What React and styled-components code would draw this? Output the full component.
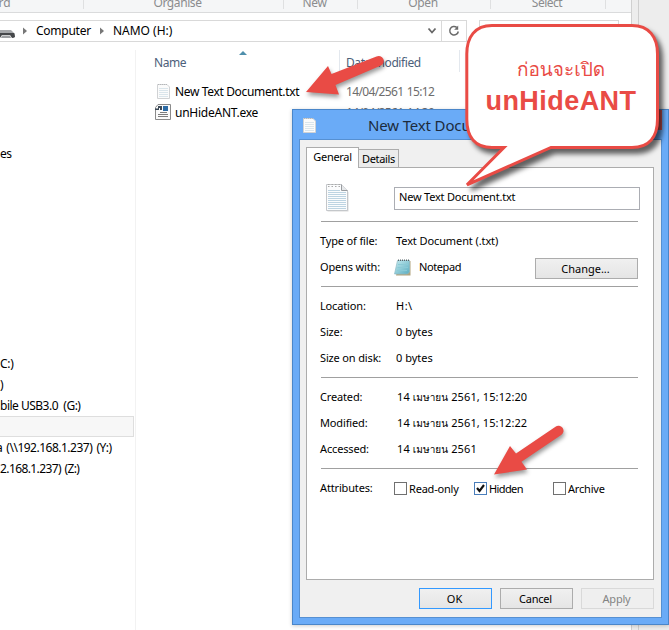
import styled, { createGlobalStyle } from "styled-components";

const GlobalStyle = createGlobalStyle`
  * {
    box-sizing: border-box;
  }

  body {
    margin: 0;
    overflow: hidden;
    background: #ededed;
    font-family: "Noto Sans", "Loma", "Noto Sans Thai Looped", sans-serif;
    font-size: 12px;
    color: #000;
  }
`;

const Desktop = styled.div`
  position: relative;
  width: 669px;
  height: 630px;
  overflow: hidden;
  background: #ededed;
`;

const Text = styled.span`
  white-space: pre;
  letter-spacing: ${(p) => p.$ls || 0}px;
  word-spacing: ${(p) => p.$ws || 0}px;
`;

/* ---------- explorer ---------- */

const BackWindow = styled.div`
  width: 639px;
  height: 630px;
  border-right: 1px solid #cfcfcf;
`;

const Explorer = styled.div`
  display: flex;
  flex-direction: column;
  width: 632px;
  height: 630px;
  background: #fff;
  border-right: 1px solid #d0d0d0;
`;

const Ribbon = styled.div`
  display: flex;
  height: 13px;
  flex: none;
  background: #f5f6f7;
  border-bottom: 1px solid #dadbdc;
`;

const RibbonGroup = styled.div`
  display: flex;
  justify-content: center;
  width: ${(p) => p.$w}px;
  height: 9px;
  border-right: 1px solid #dfe0e1;
  color: #8b8c8e;
  line-height: 16px;

  span {
    margin-top: -5px;
    margin-left: ${(p) => p.$shift || 0}px;
  }
`;

const AddressRow = styled.div`
  display: flex;
  flex: none;
  height: 22px;
  margin-top: 7px;
  gap: 12px;
`;

const AddressBar = styled.div`
  display: flex;
  align-items: center;
  width: 467px;
  border: 1px solid #d9d9d9;
  border-left: 0;
`;

const Crumbs = styled.div`
  display: flex;
  align-items: center;
  flex: 1;
  height: 20px;

  svg {
    flex: none;
  }
`;

const Crumb = styled(Text)`
  margin: 0 9px 0 8px;
  line-height: 20px;
`;

const RefreshCell = styled.div`
  display: flex;
  align-items: center;
  justify-content: center;
  width: 25px;
  height: 20px;
  border-left: 1px solid #d9d9d9;
`;

const SearchBox = styled.div`
  width: 140px;
  border: 1px solid #d9d9d9;
`;

const Panes = styled.div`
  display: flex;
  flex: 1;
  padding-top: 8px;
`;

const NavPane = styled.div`
  width: 136px;
  border-right: 1px solid #f2f2f2;
  padding-top: 93px;
`;

const NavItem = styled.div`
  display: flex;
  align-items: center;
  height: 21px;
  width: 134px;
  margin-top: ${(p) => p.$gap || 0}px;
  text-indent: ${(p) => p.$indent || 0}px;
  ${(p) =>
    p.$selected &&
    `
    background: #f7f7f7;
    border: 1px solid #dedede;
    border-left: 0;
  `}
`;

const FilePane = styled.div`
  flex: 1;
  padding-left: 18px;
`;

const HeaderRow = styled.div`
  display: flex;
  height: 22px;
  margin-bottom: 9px;
  color: #4c607a;
`;

const HeaderCell = styled.div`
  position: relative;
  width: ${(p) => p.$w}px;
  padding: 4px 0 0 ${(p) => p.$pad || 0}px;
  line-height: 18px;
  border-right: 1px solid #e3e8ee;

  svg {
    position: absolute;
    left: 85px;
    top: 1px;
  }
`;

const FileRow = styled.div`
  display: flex;
  align-items: center;
  height: 21px;

  svg {
    margin: -1px 3px 0 0;
    flex: none;
  }
`;

const FileName = styled.div`
  width: 171px;
`;

const FileDate = styled.div`
  color: #6d6d6d;
`;

/* ---------- properties dialog ---------- */

const Dialog = styled.div`
  position: absolute;
  left: 292px;
  top: 109px;
  width: 377px;
  height: 516px;
  display: flex;
  flex-direction: column;
  padding: 0 6px 7px 6px;
  background: #6aabf7;
  border: 1px solid #4a86c9;
  box-shadow: 0 1px 4px rgba(0, 0, 0, 0.2);
`;

const TitleBar = styled.div`
  display: flex;
  align-items: center;
  height: 29px;
  flex: none;
  font-size: 15px;
  color: #1c2b3d;

  svg {
    margin: 1px 0 0 1px;
  }

  span {
    margin-left: 50px;
    flex: 1;
  }
`;

const CloseButton = styled.div`
  align-self: flex-start;
  width: 45px;
  height: 20px;
  background: #c75050;
`;

const Client = styled.div`
  flex: 1;
  display: flex;
  flex-direction: column;
  padding: 7px 7px 8px 6px;
  background: #f0f0f0;
  border: 1px solid #5690d2;
  font-size: 11px;
  line-height: 15px;
`;

const Tabs = styled.div`
  display: flex;
  align-items: flex-end;
  height: 20px;
  flex: none;
`;

const Tab = styled.div`
  position: relative;
  display: flex;
  align-items: center;
  justify-content: center;
  width: ${(p) => p.$w}px;
  height: ${(p) => (p.$active ? 21 : 18)}px;
  padding-bottom: ${(p) => (p.$active ? 3 : 0)}px;
  background: ${(p) => (p.$active ? "#fff" : "#ececec")};
  border: 1px solid #acacac;
  border-bottom: 0;
  border-left-width: ${(p) => (p.$active ? 1 : 0)}px;
  margin-bottom: ${(p) => (p.$active ? -1 : 0)}px;
  z-index: ${(p) => (p.$active ? 1 : 0)};
`;

const TabPanel = styled.div`
  height: 413px;
  flex: none;
  padding: 19px 13px 0 14px;
  background: #fff;
  border: 1px solid #acacac;
`;

const NameRow = styled.div`
  display: flex;
  height: 34px;
  padding-left: 4px;

  svg {
    margin-top: -4px;
  }
`;

const NameInput = styled.div`
  width: 246px;
  height: 23px;
  margin-left: 44px;
  padding-left: 4px;
  line-height: 18px;
  border: 1px solid #abadb3;
`;

const Section = styled.div`
  width: 317px;
  padding: 6px 0;
  border-top: 1px solid #a0a0a0;
`;

const Field = styled.div`
  display: flex;
  align-items: center;
  height: 26px;
  padding-bottom: 1px;
`;

const FieldLabel = styled.div`
  width: 75px;
  margin-left: -1px;
  margin-right: ${(p) => p.$gap || 1}px;
  letter-spacing: -0.15px;

  span {
    letter-spacing: inherit;
  }
`;

const FieldValue = styled.div`
  display: flex;
  align-items: center;
  flex: 1;

  svg {
    margin: 1px 8px 0 -2px;
  }
`;

const Month = styled.span`
  font-family: "Loma", "Noto Sans Thai Looped", sans-serif;
  font-size: 10px;
  line-height: 10px;
`;

const Button = styled.div`
  display: flex;
  align-items: center;
  justify-content: center;
  width: ${(p) => p.$w || 73}px;
  height: 21px;
  background: ${(p) =>
    p.$disabled ? "#efefef" : "linear-gradient(#f0f0f0, #e5e5e5)"};
  border-width: 1px;
  border-style: solid;
  border-color: ${(p) =>
    p.$primary ? "#3399ff" : p.$disabled ? "#d9d9d9" : "#acacac"};
  color: ${(p) => (p.$disabled ? "#838383" : "#000")};
  padding-right: 2px;
`;

const ChangeButton = styled(Button)`
  margin-top: 3px;
`;

const Check = styled.div`
  display: flex;
  align-items: center;
  width: ${(p) => p.$w}px;
  margin-top: 2px;
  gap: 2px;
`;

const Box = styled.div`
  width: 13px;
  height: 13px;
  border: 1px solid ${(p) => (p.$on ? "#4a7ebb" : "#707070")};
  background: #fff;

  svg {
    display: block;
  }
`;

const Footer = styled.div`
  display: flex;
  justify-content: flex-end;
  gap: 8px;
  margin-top: 8px;
`;

/* ---------- annotations ---------- */

const Annotations = styled.svg`
  position: absolute;
  left: 0;
  top: 0;
  filter: drop-shadow(4px 5px 2.5px rgba(0, 0, 0, 0.6));
`;

const Arrows = styled(Annotations)`
  filter: drop-shadow(1px 3px 2px rgba(0, 0, 0, 0.4));
`;

const BubbleText = styled.div`
  position: absolute;
  left: 466px;
  top: 24px;
  width: 193px;
  height: 125px;
  padding-top: 31px;
  display: flex;
  flex-direction: column;
  align-items: center;
  color: #e94b45;
`;

const ThaiLine = styled(Text)`
  height: 29px;
  line-height: 28px;
  margin-left: -3px;
  font-family: "Loma", "Noto Sans Thai Looped", "Liberation Sans", sans-serif;
  font-size: 19px;
`;

const BoldLine = styled(Text)`
  height: 34px;
  line-height: 35px;
  margin-left: -3px;
  font-family: "Liberation Sans", Arial, sans-serif;
  font-size: 27px;
  font-weight: bold;
`;

const CrumbArrow = () => (
  <svg width="5" height="8" viewBox="0 0 5 8">
    <path d="M0 0.5L4 4L0 7.5Z" fill="#777" />
  </svg>
);

const DriveIcon = () => (
  <svg width="23" height="20" viewBox="0 0 23 20">
    <path d="M0 9H11L15 13H0Z" fill="#a5a7aa" />
    <path d="M0 12H14Q15 13 15 16Q14 17 12 17L10 14H2L0 17Z" fill="#45474a" />
    <path d="M2 14.5H10L11 17H1Z" fill="#9d9fa2" />
  </svg>
);

const PageIcon = ({ w = 18, h = 16 }) => (
  <svg width={w} height={h} viewBox="0 0 18 16">
    <path d="M3.5 1.5H13L15.5 4V15.5H3.5Z" fill="#fbfbfb" stroke="#d0d2d4" />
    <path d="M4 1.5H13" stroke="#b5b7b9" strokeDasharray="1 1" />
    <path d="M5 5.5H14M5 7.5H14M5 9.5H14M5 11.5H14M5 13.5H14" stroke="#dae5eb" />
  </svg>
);

const ExeIcon = () => (
  <svg width="18" height="16" viewBox="0 0 18 16">
    <path d="M1.5 3.5L4 0.5H16.5V15.5H1.5Z" fill="#fafafa" stroke="#8a8a8a" />
    <path d="M1 6V4.5H4V2H8V6H6V4H5V6Z" fill="#3d4a58" />
    <rect x="9" y="2" width="5" height="5" fill="#2c6ba5" />
    <path d="M6 8.5H13M4 10.5H14M4 12.5H14" stroke="#7d7d7d" />
  </svg>
);

const BigPageIcon = () => (
  <svg width="25" height="30" viewBox="0 0 25 30">
    <path d="M2.5 2.5H17L23.5 9V28.5H2.5Z" fill="#dadada" />
    <path d="M1.5 1.5H16.5L22.5 7.5V27.5H1.5Z" fill="#fbfcfd" stroke="#c4c7ca" />
    <path d="M16.5 1.5V7.5H22.5" fill="#e6e8ea" stroke="#999ca0" />
    <path d="M3 3.5H15M3 1.5H15" stroke="#aaa" strokeDasharray="1.5 2" />
    <path
      d="M3 7.5H15M3 9.5H21M3 11.5H21M3 13.5H21M3 15.5H21M3 17.5H21M3 19.5H21M3 21.5H21M3 23.5H21M3 25.5H21"
      stroke="#bdd4e2"
    />
  </svg>
);

const NotepadIcon = () => (
  <svg width="17" height="17" viewBox="0 0 17 17">
    <defs>
      <linearGradient id="pad" x1="0" y1="0" x2="1" y2="1">
        <stop offset="0" stopColor="#c5ebf0" />
        <stop offset="1" stopColor="#5badc0" />
      </linearGradient>
    </defs>
    <path d="M5 2H16.5V16.5H2Z" fill="#b1a47e" />
    <path d="M3.5 1.5H15.5V13L13.5 15H0.5Z" fill="url(#pad)" stroke="#8fbcc7" strokeWidth="0.7" />
    <path d="M4 5.5H14M3.5 8.5H14M3 11.5H13" stroke="#8bcad6" />
    <path d="M4 1.2H15" stroke="#59666b" strokeWidth="1.6" strokeDasharray="1 1" />
  </svg>
);

const App = () => {
  return (
    <Desktop>
      <GlobalStyle />
      <BackWindow>
        <Explorer>
          <Ribbon>
            <RibbonGroup $w={84} $shift={-74}>
              <Text>rd</Text>
            </RibbonGroup>
            <RibbonGroup $w={200} $shift={-12}>
              <Text $ls={-0.4}>Organise</Text>
            </RibbonGroup>
            <RibbonGroup $w={74} $shift={-12}>
              <Text $ls={-0.3}>New</Text>
            </RibbonGroup>
            <RibbonGroup $w={133} $shift={-2}>
              <Text $ls={-0.4}>Open</Text>
            </RibbonGroup>
            <RibbonGroup $w={115} $shift={-2}>
              <Text $ls={-0.5}>Select</Text>
            </RibbonGroup>
          </Ribbon>
          <AddressRow>
            <AddressBar>
              <Crumbs>
                <DriveIcon />
                <CrumbArrow />
                <Crumb $ls={-0.25}>Computer</Crumb>
                <CrumbArrow />
                <Crumb>NAMO (H:)</Crumb>
              </Crumbs>
              <svg width="17" height="8" viewBox="0 0 17 8">
                <path d="M4.5 1.5L8 5.5L11.5 1.5" fill="none" stroke="#666" strokeWidth="1.8" />
              </svg>
              <RefreshCell>
                <svg width="12" height="12" viewBox="0 0 12 12">
                  <path d="M8.8 2.4A4.3 4.3 0 1 0 10.3 6.5" fill="none" stroke="#6a6a6a" strokeWidth="1.5" />
                  <path d="M6.2 4.8H10.2V0.6Z" fill="#6a6a6a" />
                </svg>
              </RefreshCell>
            </AddressBar>
            <SearchBox />
          </AddressRow>
          <Panes>
            <NavPane>
              <NavItem>
                <Text $ls={-0.6}>es</Text>
              </NavItem>
              <NavItem $gap={189}>
                <Text $ls={-0.3}>C:)</Text>
              </NavItem>
              <NavItem>
                <Text>)</Text>
              </NavItem>
              <NavItem>
                <Text $ls={-0.5}>bile USB3.0  (G:)</Text>
              </NavItem>
              <NavItem $selected />
              <NavItem $indent={-4}>
                <Text $ls={-0.5} $ws={1.5}>a (\\192.168.1.237) (Y:)</Text>
              </NavItem>
              <NavItem>
                <Text $ls={-0.6} $ws={1}>2.168.1.237) (Z:)</Text>
              </NavItem>
            </NavPane>
            <FilePane>
              <HeaderRow>
                <HeaderCell $w={186}>
                  <Text $ls={-0.4}>Name</Text>
                  <svg width="8" height="4" viewBox="0 0 8 4">
                    <path d="M0 4L4 0L8 4Z" fill="#4f8fac" />
                  </svg>
                </HeaderCell>
                <HeaderCell $w={120} $pad={6}>
                  <Text $ls={-0.4}>Date modified</Text>
                </HeaderCell>
              </HeaderRow>
              <FileRow>
                <PageIcon />
                <FileName>
                  <Text $ls={-0.35}>New Text Document.txt</Text>
                </FileName>
                <FileDate>
                  <Text $ls={-0.65} $ws={1}>14/04/2561 15:12</Text>
                </FileDate>
              </FileRow>
              <FileRow>
                <ExeIcon />
                <FileName>
                  <Text $ls={-0.25}>unHideANT.exe</Text>
                </FileName>
                <FileDate>
                  <Text $ls={-0.65} $ws={1}>14/04/2561 14:39</Text>
                </FileDate>
              </FileRow>
            </FilePane>
          </Panes>
        </Explorer>
      </BackWindow>

      <Dialog>
        <TitleBar>
          <PageIcon w={18} h={16} />
          <Text $ls={-0.15}>New Text Document.txt</Text>
          <CloseButton />
        </TitleBar>
        <Client>
          <Tabs>
            <Tab $active $w={53}>
              <Text $ls={-0.3}>General</Text>
            </Tab>
            <Tab $w={40}>
              <Text $ls={-0.35}>Details</Text>
            </Tab>
          </Tabs>
          <TabPanel>
            <NameRow>
              <BigPageIcon />
              <NameInput>
                <Text $ls={-0.2}>New Text Document.txt</Text>
              </NameInput>
            </NameRow>
            <Section>
              <Field>
                <FieldLabel>
                  <Text>Type of file:</Text>
                </FieldLabel>
                <FieldValue>
                  <Text $ls={-0.1}>Text Document (.txt)</Text>
                </FieldValue>
              </Field>
              <Field>
                <FieldLabel>
                  <Text>Opens with:</Text>
                </FieldLabel>
                <FieldValue>
                  <NotepadIcon />
                  <Text $ls={-0.4}>Notepad</Text>
                </FieldValue>
                <ChangeButton $w={103}>
                  <Text>Change...</Text>
                </ChangeButton>
              </Field>
            </Section>
            <Section>
              <Field>
                <FieldLabel>
                  <Text>Location:</Text>
                </FieldLabel>
                <Text $ls={0.5}>H:\</Text>
              </Field>
              <Field>
                <FieldLabel>
                  <Text>Size:</Text>
                </FieldLabel>
                <Text>0 bytes</Text>
              </Field>
              <Field>
                <FieldLabel>
                  <Text>Size on disk:</Text>
                </FieldLabel>
                <Text>0 bytes</Text>
              </Field>
            </Section>
            <Section>
              <Field>
                <FieldLabel $gap={2}>
                  <Text>Created:</Text>
                </FieldLabel>
                <Text $ls={0.1}>
                  14 <Month>เมษายน</Month> 2561, 15:12:20
                </Text>
              </Field>
              <Field>
                <FieldLabel $gap={2}>
                  <Text>Modified:</Text>
                </FieldLabel>
                <Text $ls={0.1}>
                  14 <Month>เมษายน</Month> 2561, 15:12:22
                </Text>
              </Field>
              <Field>
                <FieldLabel $gap={2}>
                  <Text>Accessed:</Text>
                </FieldLabel>
                <Text $ls={0.1}>
                  14 <Month>เมษายน</Month> 2561
                </Text>
              </Field>
            </Section>
            <Section>
              <Field>
                <FieldLabel $gap={-1}>
                  <Text>Attributes:</Text>
                </FieldLabel>
                <Check $w={80}>
                  <Box />
                  <Text $ls={-0.2}>Read-only</Text>
                </Check>
                <Check $w={79}>
                  <Box $on>
                    <svg width="11" height="11" viewBox="0 0 11 11">
                      <path d="M2 5L4.5 8L9 2" fill="none" stroke="#111" strokeWidth="2.1" />
                    </svg>
                  </Box>
                  <Text $ls={-0.6}>Hidden</Text>
                </Check>
                <Check>
                  <Box />
                  <Text $ls={-0.2}>Archive</Text>
                </Check>
              </Field>
            </Section>
          </TabPanel>
          <Footer>
            <Button $primary>OK</Button>
            <Button>
              <Text $ls={-0.2}>Cancel</Text>
            </Button>
            <Button $disabled>
              <Text $ls={-0.2}>Apply</Text>
            </Button>
          </Footer>
        </Client>
      </Dialog>

      <Arrows width="669" height="630" viewBox="0 0 669 630">
        <path
          d="M306 92L328 66L331.5 74L376.5 56.5A5 5 0 0 1 381 65.5L335.5 85L339 94.5Z"
          fill="#e94b45"
        />
        <path
          d="M494 474.5L510 446L516 453.5L555.5 426.7A5 5 0 0 1 561.5 434.8L521.5 461.7L527 469.5Z"
          fill="#e94b45"
        />
      </Arrows>
      <Annotations width="669" height="630" viewBox="0 0 669 630">
        <path
          d="M492 25.5H632C649 25.5 657.5 37 657.5 54V119C657.5 137 649 147.5 632 147.5H551L467 184.8L504 147.5H492C475 147.5 466.8 137 466.8 119V54C466.8 37 475 25.5 492 25.5Z"
          fill="#fff"
          stroke="#e94b45"
          strokeWidth="3"
        />
      </Annotations>
      <BubbleText>
        <ThaiLine>ก่อนจะเปิด</ThaiLine>
        <BoldLine $ls={0.45}>unHideANT</BoldLine>
      </BubbleText>
    </Desktop>
  );
};

export default App;
